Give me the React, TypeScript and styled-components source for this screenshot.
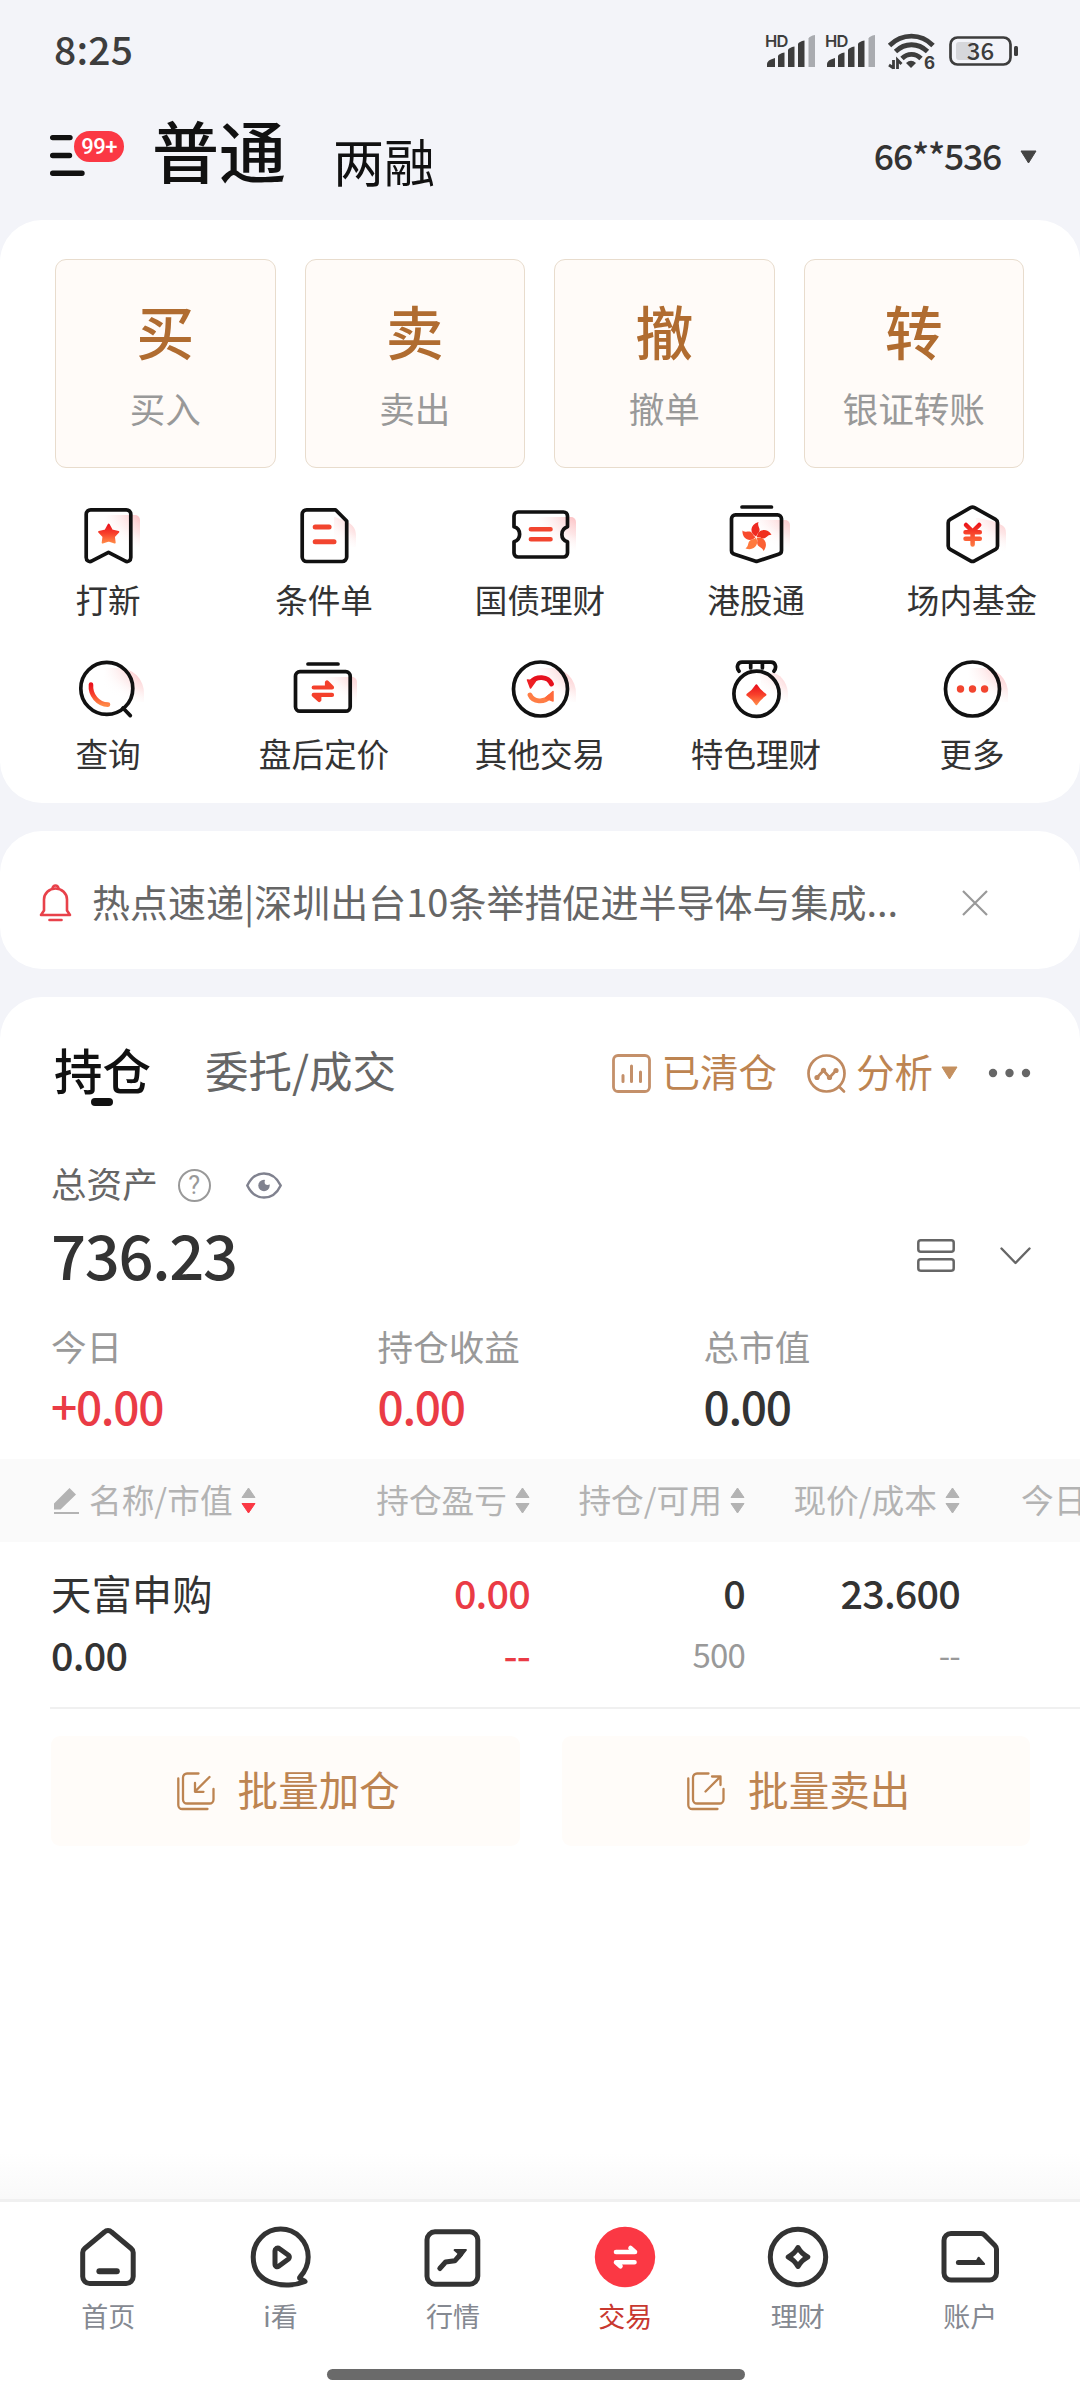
import React from "react";
import styled, { createGlobalStyle } from "styled-components";

const CJK = '"Noto Sans CJK SC", "Noto Sans", sans-serif';
const ROBOTO = 'Roboto, "Noto Sans CJK SC", sans-serif';

const Global = createGlobalStyle`
  * { box-sizing: border-box; }
  body { margin: 0; background: #f3f4f9; font-family: ${CJK}; }
  svg { display: block; flex: none; overflow: visible; }
`;

const Screen = styled.div`
  width: 1080px;
  height: 2400px;
  display: flex;
  flex-direction: column;
  overflow: hidden;
  background: #f3f4f9;
  white-space: nowrap;
`;

/* ---------- status bar ---------- */
const StatusBar = styled.div`
  height: 100px;
  display: flex;
  align-items: center;
  justify-content: space-between;
  padding: 2px 62px 0 54px;
`;
const Clock = styled.span`
  margin-top: -7px;
  font: 500 39px/44px ${CJK};
  letter-spacing: 0.2px;
  color: #3d3d3d;
`;
const StatusIcons = styled.div`
  display: flex;
  align-items: center;
`;
const Battery = styled.svg`
  margin-left: 14px;
`;
const Wifi = styled.svg`
  margin-left: 3px;
`;
const Signal = styled.svg`
  margin-right: 8px;
`;

/* ---------- header ---------- */
const Header = styled.header`
  height: 120px;
  display: flex;
  align-items: flex-start;
  padding: 0 43px 0 50px;
  color: #111;
`;
const MenuButton = styled.div`
  position: relative;
  width: 102px;
  padding-top: 34px;
`;
const Badge = styled.span`
  position: absolute;
  left: 22px;
  top: 29px;
  height: 35px;
  width: 54px;
  border: 2px solid #f3f4f9;
  border-radius: 18px;
  background: #fb3844;
  color: #fff;
  text-align: center;
  font: 500 22px/32px ${ROBOTO};
  letter-spacing: -0.5px;
`;
const AccountTab = styled.span<{ $active?: boolean }>`
  font: ${(p) => (p.$active ? "500 67px/96px" : "400 51px/72px")} ${CJK};
  padding-top: ${(p) => (p.$active ? 1 : 24)}px;
  margin-right: ${(p) => (p.$active ? 47 : 0)}px;
`;
const AccountPicker = styled.div`
  margin-left: auto;
  display: flex;
  align-items: center;
  gap: 19px;
  padding-top: 36px;
`;
const AccountNumber = styled.span`
  margin-top: -3px;
  font: 500 35.5px/44px ${CJK};
  letter-spacing: -1.2px;
  color: #333;
`;

/* ---------- cards ---------- */
const Card = styled.section`
  background: #fff;
  border-radius: 42px;
`;
const QuickCard = styled(Card)`
  height: 583px;
  padding-top: 39px;
`;
const TradeGrid = styled.div`
  display: grid;
  grid-template-columns: repeat(4, 1fr);
  gap: 29px;
  padding: 0 56px 0 55px;
`;
const TradeTile = styled.div`
  height: 209px;
  border: 1px solid #e8dccd;
  border-radius: 11px;
  background: #fffbf8;
  display: flex;
  flex-direction: column;
  align-items: center;
  padding-top: 32px;
`;
const TradeGlyph = styled.span`
  font: 500 58px/76px ${CJK};
  color: #b06c30;
`;
const TradeLabel = styled.span`
  margin-top: 16px;
  font: 400 35.6px/48px ${CJK};
  color: #999;
`;
const MenuGrid = styled.div`
  display: grid;
  grid-template-columns: repeat(5, 216px);
  row-gap: 32.5px;
  padding-top: 32px;
`;
const MenuItem = styled.div`
  display: flex;
  flex-direction: column;
  align-items: center;
  gap: 5px;
  font: 400 32.6px/44px ${CJK};
  color: #333;
`;

const Notice = styled(Card)`
  height: 138px;
  margin: 28px 0;
  display: flex;
  align-items: center;
  padding: 6px 92px 0 39px;
`;
const NoticeText = styled.span`
  margin-left: 20px;
  margin-top: -4px;
  flex: 1;
  font: 400 38px/56px ${CJK};
  color: #666;
`;

/* ---------- holdings ---------- */
const Holdings = styled.section`
  flex: 1;
  background: #fff;
  border-radius: 42px 42px 0 0;
  display: flex;
  flex-direction: column;
`;
const TabRow = styled.div`
  height: 152px;
  display: flex;
  align-items: center;
  padding: 0 49px 0 54px;
`;
const Tab = styled.span<{ $active?: boolean }>`
  position: relative;
  font: ${(p) => (p.$active ? "500 48.5px/56px" : "400 43.5px/60px")} ${CJK};
  color: ${(p) => (p.$active ? "#111" : "#666")};
  margin-right: ${(p) => (p.$active ? 54 : 0)}px;
  padding-bottom: ${(p) => (p.$active ? 9 : 6)}px;
`;
const TabMark = styled.i`
  position: absolute;
  left: 37px;
  bottom: 0;
  width: 22px;
  height: 8px;
  border-radius: 4px;
  background: #111;
`;
const TabTools = styled.div`
  margin-left: auto;
  display: flex;
  align-items: center;
`;
const Tool = styled.div`
  display: flex;
  align-items: center;
  gap: 10px;
  margin-right: 30px;
  font: 400 38.5px/60px ${CJK};
  color: #bd8451;
`;
const ToolText = styled.span`
  margin-top: -7px;
`;
const ToolCaret = styled.span`
  margin-left: -2px;
`;
const AssetLabel = styled.div`
  display: flex;
  align-items: center;
  height: 72px;
  padding-left: 51px;
  font: 400 35.6px/48px ${CJK};
  color: #666;
`;
const LabelText = styled.span`
  margin-top: -4px;
`;
const Help = styled.span`
  width: 33px;
  height: 33px;
  margin: 0 35px 0 20px;
  border: 2px solid #999;
  border-radius: 50%;
  color: #999;
  text-align: center;
  font: 400 25px/29px ${ROBOTO};
`;
const AssetRow = styled.div`
  display: flex;
  align-items: center;
  height: 72px;
  padding: 0 49px 3px 51px;
`;
const AssetValue = styled.span`
  margin: -4px auto 0 0;
  font: 500 61.5px/72px ${CJK};
  letter-spacing: -1.3px;
  color: #333;
`;
const ListIcon = styled.svg`
  margin-right: 45px;
`;
const Stats = styled.div`
  display: grid;
  grid-template-columns: 326.5px 326px 1fr;
  height: 166px;
  padding: 27px 0 0 51px;
`;
const StatLabel = styled.div`
  font: 400 35.6px/52px ${CJK};
  color: #999;
`;
const StatValue = styled.div<{ $red?: boolean }>`
  margin-top: 6px;
  font: 500 46px/54px ${CJK};
  letter-spacing: -1.3px;
  color: ${(p) => (p.$red ? "#ea3b45" : "#333")};
`;

const TableRow = styled.div`
  display: grid;
  grid-template-columns: 264px 215px 215px 215px 1fr;
  padding-left: 51px;
`;
const TableHead = styled(TableRow)`
  height: 83px;
  align-items: center;
  background: #fafafa;
  overflow: hidden;
`;
const HeadCell = styled.div<{ $align?: "start" | "end"; $indent?: number }>`
  display: flex;
  align-items: center;
  justify-content: flex-${(p) => p.$align ?? "end"};
  padding-left: ${(p) => p.$indent ?? 0}px;
  gap: 8px;
  font: 400 32.7px/44px ${CJK};
  color: #b3b3b3;
`;
const HeadText = styled.span`
  margin-top: -4px;
`;
const BodyRow = styled(TableRow)`
  height: 165px;
  padding-top: 20px;
`;
const Cell = styled.div<{ $left?: boolean }>`
  display: flex;
  flex-direction: column;
  gap: 2px;
  align-items: ${(p) => (p.$left ? "flex-start" : "flex-end")};
`;
const StockName = styled.span`
  height: 60px;
  font: 400 40.4px/62px ${CJK};
  color: #333;
`;
const Figure = styled.span<{ $tone?: "red" | "gray" }>`
  font: ${(p) => (p.$tone === "gray" ? 400 : 500)} ${(p) => (p.$tone === "gray" ? 33 : 39.5)}px/60px ${CJK};
  letter-spacing: -0.8px;
  color: ${(p) => (p.$tone === "red" ? "#ea3b45" : p.$tone === "gray" ? "#999" : "#333")};
`;
const Divider = styled.div`
  height: 2px;
  margin-left: 50px;
  background: #f0f0f0;
`;
const BatchRow = styled.div`
  display: grid;
  grid-template-columns: 1fr 1fr;
  gap: 42px;
  padding: 27px 50px 0 51px;
`;
const BatchButton = styled.div`
  height: 110px;
  border-radius: 9px;
  background: #fffcf9;
  display: flex;
  align-items: center;
  justify-content: center;
  gap: 23px;
  padding-left: 6px;
  font: 400 40.6px/60px ${CJK};
  color: #bd8451;
`;
const Fade = styled.div`
  height: 46px;
  margin-top: auto;
  background: linear-gradient(#fff, #f9f9f9);
`;

/* ---------- bottom bar ---------- */
const BottomBar = styled.nav`
  height: 201px;
  border-top: 3px solid #f0f0f0;
  background: #fff;
  padding: 19px 23px 0 22px;
`;
const NavGrid = styled.div`
  display: grid;
  grid-template-columns: repeat(6, 172.4px);
`;
const NavItem = styled.div<{ $active?: boolean }>`
  display: flex;
  flex-direction: column;
  align-items: center;
  gap: 4px;
  font: 400 27px/38px ${CJK};
  color: ${(p) => (p.$active ? "#c8382f" : "#858991")};
`;
const HomeBar = styled.div`
  width: 418px;
  height: 11px;
  margin: 34px 0 0 305px;
  border-radius: 6px;
  background: #6a6a6a;
`;

/* ---------- drawings ---------- */
const GradientDefs = styled.svg`
  position: absolute;
`;
const Defs = () => (
  <GradientDefs width="0" height="0">
    <defs>
      <linearGradient id="hot" x1="0" y1="20" x2="0" y2="50" gradientUnits="userSpaceOnUse">
        <stop offset="0" stopColor="#e60012" />
        <stop offset="0.45" stopColor="#f8452c" />
        <stop offset="1" stopColor="#ff8a48" />
      </linearGradient>
      <linearGradient id="hotBox" x1="0" y1="0" x2="0" y2="1">
        <stop offset="0" stopColor="#e9131d" />
        <stop offset="0.5" stopColor="#f8402b" />
        <stop offset="1" stopColor="#ff8646" />
      </linearGradient>
      <linearGradient id="glow" x1="66" y1="14" x2="52" y2="46" gradientUnits="userSpaceOnUse">
        <stop offset="0" stopColor="#fcc0c3" />
        <stop offset="0.5" stopColor="#fddcdd" stopOpacity="0.7" />
        <stop offset="1" stopColor="#fff" stopOpacity="0" />
      </linearGradient>
      <linearGradient id="glowLeft" x1="32" y1="0" x2="66" y2="0" gradientUnits="userSpaceOnUse">
        <stop offset="0" stopColor="#fff" />
        <stop offset="0.3" stopColor="#fff" stopOpacity="0.7" />
        <stop offset="1" stopColor="#fff" stopOpacity="0" />
      </linearGradient>
    </defs>
  </GradientDefs>
);

const Glow = ({ d }: { d: string }) => (
  <g stroke="none">
    <path d={d} fill="url(#glow)" />
    <path d={d} fill="url(#glowLeft)" />
  </g>
);
const SquareGlow = ({ x = 68, y = 15 }: { x?: number; y?: number }) => (
  <Glow d={`M30 ${y}H${x - 5}a5 5 0 0 1 5 5V50H30z`} />
);
const RoundGlow = () => <Glow d="M30 14h16a25 25 0 0 1 26 26v8H30z" />;

const MenuIcon = ({ children }: { children: React.ReactNode }) => (
  <svg width="72" height="72" viewBox="0 0 72 72" fill="none" stroke="#111" strokeWidth="3.7" strokeLinecap="round" strokeLinejoin="round">
    {children}
  </svg>
);

const petals: [number, string][] = [
  [0, "#ee2a22"],
  [72, "#f0301f"],
  [144, "#fb6034"],
  [216, "#ff7a3e"],
  [288, "#f8492c"],
];

const menuItems: { label: string; icon: React.ReactNode }[] = [
  {
    label: "打新",
    icon: (
      <>
        <SquareGlow />
        <path d="M18.7 9.8H54.3a4.500 4.500 0 0 1 4.500 4.500V57.500c0 3.200-3 5-5.800 3.400L36.500 52.300 20 60.900c-2.800 1.600-5.800-.2-5.800-3.400V14.300a4.500 4.500 0 0 1 4.500-4.500z" />
        <path d="M36.700 24.500l3.300 6 6.400 1.300-4.400 4.800.8 6-6.100-2-6.100 2 .8-6-4.400-4.800 6.400-1.300z" fill="url(#hotBox)" stroke="url(#hotBox)" strokeWidth="1.800" />
      </>
    ),
  },
  {
    label: "条件单",
    icon: (
      <>
        <Glow d="M46 17c8 3 22 5 22 18v12H46z" />
        <path d="M18.700 9.800H47.500L58.700 21V57a4.500 4.500 0 0 1-4.500 4.500H18.700a4.500 4.500 0 0 1-4.500-4.500V14.300a4.500 4.500 0 0 1 4.500-4.500z" />
        <path d="M27.200 27H41.100M27.200 41.700H46" stroke="#f2452f" strokeWidth="5" />
      </>
    ),
  },
  {
    label: "国债理财",
    icon: (
      <>
        <SquareGlow x={72} y={17} />
        <path d="M14 12H59.500a4 4 0 0 1 4 4V26.800c-7.500 2.500-7.500 12.700 0 15V53a4 4 0 0 1-4 4H14a4 4 0 0 1-4-4V41.800c7.500-2.500 7.500-12.700 0-15V16a4 4 0 0 1 4-4z" />
        <path d="M26.900 29.300H46.500M26.900 39.300H46.500" stroke="#f2452f" strokeWidth="4.600" />
      </>
    ),
  },
  {
    label: "港股通",
    icon: (
      <>
        <SquareGlow x={70} y={20} />
        <path d="M22 7H51.500M15.500 14.800H57.500a4 4 0 0 1 4 4V50.500a4 4 0 0 1-3 3.800L36.500 61.500 14.500 54.300a4 4 0 0 1-3-3.800V18.800a4 4 0 0 1 4-4z" />
        <g stroke="none">
          {petals.map(([angle, color]) => (
            <path
              key={angle}
              d="M36.300 36.600C29.500 34 29.500 24.500 38.500 22C36.800 26.500 41.500 28.500 38.800 32.500C37.200 34 36.800 35 36.300 36.600z"
              fill={color}
              transform={`rotate(${angle} 36.300 37.300)`}
            />
          ))}
        </g>
      </>
    ),
  },
  {
    label: "场内基金",
    icon: (
      <>
        <Glow d="M40 18l16 3c9 4 14 4 14 12v20H40z" />
        <path d="M34.500 7.700a4 4 0 0 1 4 0L59.500 19.300a4 4 0 0 1 2 3.400V46a4 4 0 0 1-2 3.400L38.500 60.900a4 4 0 0 1-4 0L14.200 49.400a4 4 0 0 1-2-3.400V22.700a4 4 0 0 1 2-3.400z" />
        <path d="M30 25l6.600 6.500L43.200 25M29.500 32.200H43.800M29.500 38.800H43.800M36.600 32V44.500" stroke="url(#hot)" strokeWidth="4.500" />
      </>
    ),
  },
  {
    label: "查询",
    icon: (
      <>
        <RoundGlow />
        <circle cx="34.800" cy="34.400" r="26" />
        <path d="M51 54l7.300 7.600" />
        <path d="M19 30.500C18 41 26 50.600 36 50.600" stroke="url(#hotBox)" strokeWidth="4.600" />
      </>
    ),
  },
  {
    label: "盘后定价",
    icon: (
      <>
        <SquareGlow x={69} y={23} />
        <path d="M20 10H50" />
        <rect x="7.500" y="17.700" width="54.700" height="39.500" rx="4.500" />
        <g stroke="#f4402b" strokeWidth="4.200" fill="#f4402b">
          <path d="M25.700 33.500H44L39 28.500V33" />
          <path d="M44 40.900H25.700l5.600 5V41" />
        </g>
      </>
    ),
  },
  {
    label: "其他交易",
    icon: (
      <>
        <RoundGlow />
        <circle cx="36.500" cy="35" r="27" />
        <path d="M27 28c5-6 17-6.500 20.500 2" stroke="#e60f1c" strokeWidth="4.800" />
        <path d="M23.500 26l8 1-5 7z" fill="#ee2024" stroke="#ee2024" strokeWidth="1.500" />
        <path d="M26 41c3 7 14 8 20 1.500" stroke="#ff7d45" strokeWidth="4.800" />
        <path d="M49 37.500v9.500l-7.500-3z" fill="#ff6a3c" stroke="#ff6a3c" strokeWidth="1.500" />
      </>
    ),
  },
  {
    label: "特色理财",
    icon: (
      <>
        <Glow d="M40 19h14c9 3 14 12 14 22v8H44z" />
        <circle cx="36.500" cy="39.800" r="22.600" />
        <path d="M19 17.200c-3-4-1.500-9 3-9H51c4.500 0 6 5 3 9M30.700 9v5M42.400 9v5" />
        <path d="M36.400 31.500C39 35.800 41 37.800 45.200 40.800 41 43.600 39 45.700 36.400 50 33.800 45.700 31.800 43.600 27.500 40.800 31.800 37.800 33.800 35.800 36.400 31.500z" fill="url(#hotBox)" stroke="url(#hotBox)" strokeWidth="2.400" />
      </>
    ),
  },
  {
    label: "更多",
    icon: (
      <>
        <RoundGlow />
        <circle cx="36.500" cy="35" r="27" />
        <g fill="#f2452f" stroke="none">
          <circle cx="24.500" cy="35" r="3.700" />
          <circle cx="36.500" cy="35" r="3.700" />
          <circle cx="48.600" cy="35" r="3.700" />
        </g>
      </>
    ),
  },
];

const navItems: { label: string; active?: boolean; icon: React.ReactNode }[] = [
  {
    label: "首页",
    icon: (
      <>
        <path d="M32.500 11a5 5 0 0 1 7 0L59.200 27.500a5.500 5.500 0 0 1 2 4V55.500a7 7 0 0 1-7 7H17.700a7 7 0 0 1-7-7V31.500a5.500 5.500 0 0 1 2-4z" />
        <path d="M27.400 50.300H44.800" strokeWidth="6" />
      </>
    ),
  },
  {
    label: "i看",
    icon: (
      <>
        <path d="M60 60.500C41 68.500 8.200 64 8.200 36A27.500 28 0 0 1 63.200 36C63.200 44 60 50.500 55 56c-2 2 3.500 3 5 4.500z" />
        <path d="M31.500 27.300c-1 .6-1.500 1.300-1.500 2.400V43c0 2.800 2.200 3.400 4 2l9.500-7a2.500 2.500 0 0 0 0-3.800l-9-6.500a3 3 0 0 0-3-.4z" />
      </>
    ),
  },
  {
    label: "行情",
    icon: (
      <>
        <rect x="10" y="10.800" width="50.800" height="52.400" rx="8" />
        <path d="M22.800 47.500l5.800-6.500 9.200-1.200 6-6.800" />
        <path d="M37.500 29H49l-6.500 8-1.500-5z" fill="#333" strokeWidth="1.800" />
      </>
    ),
  },
  {
    label: "交易",
    active: true,
    icon: (
      <>
        <circle cx="36" cy="36" r="30.200" fill="#fb3844" stroke="none" />
        <path d="M27 31H46L41.500 27M45.500 41.300H27l4.500 4" stroke="#fff" strokeWidth="4.600" />
      </>
    ),
  },
  {
    label: "理财",
    icon: (
      <>
        <circle cx="36" cy="36" r="27.700" />
        <path d="M36 26.500C38.500 31 41 33.500 45.800 36 41 38.500 38.500 41 36 45.500 33.500 41 31 38.500 26.200 36 31 33.500 33.500 31 36 26.500z" />
      </>
    ),
  },
  {
    label: "账户",
    icon: (
      <>
        <path d="M17 12.500H47a5 5 0 0 1 3.500 1.500L60.700 24.200a6 6 0 0 1 1.800 4V52a7 7 0 0 1-7 7H17a7 7 0 0 1-7-7V19.500a7 7 0 0 1 7-7z" />
        <path d="M24.400 41.600H46" />
        <path d="M44.600 36.700l5.500 6.300h-9z" fill="#333" strokeWidth="2" />
      </>
    ),
  },
];

const SignalIcon = () => (
  <Signal width="52" height="36" viewBox="0 0 52 36" fill="#3d3d3d">
    <text x="0" y="13.500" fontSize="16.500" fontWeight="600" fontFamily="Inter, sans-serif" textLength="23.500">HD</text>
    <path d="M2 34v-3q0-4 8-6v9zM13 34V23q1-2.500 6.500-3.500V34zM23 34V17q1-2.500 6.500-3.500V34zM33 34V11q1-2.500 6.500-3.500V34z" />
    <path d="M43.500 34V5.500q1-2.500 6.500-3.500V34z" fill="#a9abb0" />
  </Signal>
);

const Caret = ({ color }: { color: string }) => (
  <svg width="17" height="14" viewBox="0 0 17 14">
    <path d="M1 1h15L8.500 13z" fill={color} stroke={color} strokeLinejoin="round" />
  </svg>
);

const SortIcon = ({ down = "#b3b3b3" }: { down?: string }) => (
  <svg width="15" height="27" viewBox="0 0 15 27" strokeLinejoin="round">
    <path d="M7.500 1L14 10.500H1z" fill="#b3b3b3" stroke="#b3b3b3" />
    <path d="M7.500 26L14 16.500H1z" fill={down} stroke={down} />
  </svg>
);

const BatchIcon = ({ out }: { out?: boolean }) => (
  <svg width="38" height="38" viewBox="0 0 38 38" fill="none" stroke="#bd8451" strokeWidth="2.300" strokeLinecap="round" strokeLinejoin="round">
    <path d="M21.500 1.500H10a4 4 0 0 0-4 4V27.500a4 4 0 0 0 4 4H32.500a4 4 0 0 0 4-4V17" />
    <path d="M1.300 6.500V33a4 4 0 0 0 4 4H30.500" />
    <path d={out ? "M18.500 19.500L33 5M25 4.500H33.500V13" : "M32.500 5L18 19.500M18 11V19.800H26.500"} />
  </svg>
);

export default function App() {
  return (
    <Screen>
      <Global />
      <Defs />
      <StatusBar>
        <Clock>8:25</Clock>
        <StatusIcons>
          <SignalIcon />
          <SignalIcon />
          <Wifi width="47" height="37" viewBox="0 0 47 37" fill="none" stroke="#3d3d3d" strokeWidth="4.800">
            <path d="M1.500 12.500C14 0 33 0 45 12.500" />
            <path d="M7.500 18.500C17 9.500 30 9.500 39.500 18.500" />
            <path d="M14 25.500C19.500 20 27.500 20 33 25.500" />
            <path d="M18 30q5-4.500 10 0l-5 5z" fill="#3d3d3d" stroke="none" />
            <path d="M5.500 27v9M1 32l4.500 3M9.500 36v-9l4 4" strokeWidth="2.800" />
            <text x="36" y="36" fontSize="17" fontWeight="700" fontFamily="Inter, sans-serif" fill="#3d3d3d" stroke="none">6</text>
          </Wifi>
          <Battery width="69" height="30" viewBox="0 0 69 30">
            <rect x="1.500" y="1.500" width="60" height="27" rx="7" fill="none" stroke="#3d3d3d" strokeWidth="2.700" />
            <rect x="7" y="6" width="18" height="18" rx="3" fill="#d6d7db" />
            <rect x="65" y="10" width="4" height="10" rx="1.500" fill="#3d3d3d" />
            <text x="31.500" y="24" fontSize="24" fontWeight="500" fontFamily="Noto Sans CJK SC, sans-serif" textAnchor="middle" fill="#3d3d3d">36</text>
          </Battery>
        </StatusIcons>
      </StatusBar>

      <Header>
        <MenuButton>
          <svg width="36" height="43" viewBox="0 0 36 43" stroke="#111" strokeWidth="5.400" strokeLinecap="round">
            <path d="M2.700 3.600H20M2.700 21.500H19.500M2.700 39.300H32" />
          </svg>
          <Badge>99+</Badge>
        </MenuButton>
        <AccountTab $active>普通</AccountTab>
        <AccountTab>两融</AccountTab>
        <AccountPicker>
          <AccountNumber>66**536</AccountNumber>
          <Caret color="#444" />
        </AccountPicker>
      </Header>

      <QuickCard>
        <TradeGrid>
          {[
            ["买", "买入"],
            ["卖", "卖出"],
            ["撤", "撤单"],
            ["转", "银证转账"],
          ].map(([glyph, label]) => (
            <TradeTile key={label}>
              <TradeGlyph>{glyph}</TradeGlyph>
              <TradeLabel>{label}</TradeLabel>
            </TradeTile>
          ))}
        </TradeGrid>
        <MenuGrid>
          {menuItems.map((m) => (
            <MenuItem key={m.label}>
              <MenuIcon>{m.icon}</MenuIcon>
              {m.label}
            </MenuItem>
          ))}
        </MenuGrid>
      </QuickCard>

      <Notice>
        <svg width="33" height="38" viewBox="0 0 33 38" fill="none" stroke="#e8414a" strokeWidth="2.600" strokeLinecap="round" strokeLinejoin="round">
          <path d="M13.500 4.500a3 3 0 0 1 6 0" />
          <path d="M2 31L5 26.500V15.500a11.500 11 0 0 1 23 0V26.500L31 31z" />
          <path d="M10.500 36H22.500" />
        </svg>
        <NoticeText>热点速递|深圳出台10条举措促进半导体与集成...</NoticeText>
        <svg width="26" height="26" viewBox="0 0 26 26" stroke="#999" strokeWidth="2.200">
          <path d="M1 1L25 25M25 1L1 25" />
        </svg>
      </Notice>

      <Holdings>
        <TabRow>
          <Tab $active>
            持仓
            <TabMark />
          </Tab>
          <Tab>委托/成交</Tab>
          <TabTools>
            <Tool>
              <svg width="39" height="39" viewBox="0 0 39 39" fill="none" stroke="#c4906a" strokeWidth="2.800" strokeLinecap="round">
                <rect x="1.500" y="1.500" width="36" height="36" rx="4.500" />
                <path d="M11 21.500V27.500M19.500 12V27.500M28.500 18V27.500" strokeWidth="3" />
              </svg>
              <ToolText>已清仓</ToolText>
            </Tool>
            <Tool>
              <svg width="39" height="39" viewBox="0 0 39 39" fill="none" stroke="#c08a60" strokeWidth="2.700" strokeLinecap="round" strokeLinejoin="round">
                <circle cx="19.500" cy="19.500" r="18" />
                <path d="M32 32.500L37 37.500M10 23.500L16.500 16.500 22.500 23.500 29 16.500" />
                <g fill="#c08a60" stroke="none">
                  <circle cx="10" cy="23.500" r="2.600" />
                  <circle cx="16.500" cy="16.300" r="2.600" />
                  <circle cx="22.500" cy="23.500" r="2.600" />
                  <circle cx="29" cy="16.500" r="2.600" />
                </g>
              </svg>
              <ToolText>分析</ToolText>
              <ToolCaret>
                <Caret color="#c4905f" />
              </ToolCaret>
            </Tool>
            <svg width="43" height="10" viewBox="0 0 43 10" fill="#666">
              <circle cx="5" cy="5" r="4.200" />
              <circle cx="21.500" cy="5" r="4.200" />
              <circle cx="38" cy="5" r="4.200" />
            </svg>
          </TabTools>
        </TabRow>

        <AssetLabel>
          <LabelText>总资产</LabelText>
          <Help>?</Help>
          <svg width="36" height="27" viewBox="0 0 36 27" fill="none" stroke="#80828f" strokeWidth="2.500" strokeLinejoin="round">
            <path d="M1.300 13.500C9-2.600 27-2.600 34.700 13.500C27 29.600 9 29.600 1.300 13.500z" />
            <circle cx="18" cy="13.500" r="5.700" fill="#80828f" stroke="none" />
            <circle cx="21.500" cy="10" r="2.900" fill="#fff" stroke="none" />
          </svg>
        </AssetLabel>
        <AssetRow>
          <AssetValue>736.23</AssetValue>
          <ListIcon width="38" height="33" viewBox="0 0 38 33" fill="none" stroke="#666" strokeWidth="2.500">
            <rect x="1.300" y="1.300" width="35.400" height="11.500" rx="2.500" />
            <rect x="1.300" y="20.200" width="35.400" height="11.500" rx="2.500" />
          </ListIcon>
          <svg width="31" height="18" viewBox="0 0 31 18" fill="none" stroke="#666" strokeWidth="2.400" strokeLinecap="round" strokeLinejoin="round">
            <path d="M1.500 1.500L15.500 16 29.500 1.500" />
          </svg>
        </AssetRow>

        <Stats>
          <div>
            <StatLabel>今日</StatLabel>
            <StatValue $red>+0.00</StatValue>
          </div>
          <div>
            <StatLabel>持仓收益</StatLabel>
            <StatValue $red>0.00</StatValue>
          </div>
          <div>
            <StatLabel>总市值</StatLabel>
            <StatValue>0.00</StatValue>
          </div>
        </Stats>

        <TableHead>
          <HeadCell $align="start" $indent={2}>
            <svg width="28" height="28" viewBox="0 0 28 28" fill="#b3b3b3">
              <path d="M1 16.500L16.500 1 23 7.500 7.500 22.500H1zM1 25H26v2H1z" />
            </svg>
            <HeadText>名称/市值</HeadText>
            <SortIcon down="#fb3844" />
          </HeadCell>
          {["持仓盈亏", "持仓/可用", "现价/成本"].map((t) => (
            <HeadCell key={t}>
              <HeadText>{t}</HeadText>
              <SortIcon />
            </HeadCell>
          ))}
          <HeadCell $align="start" $indent={61}>
            <HeadText>今日</HeadText>
          </HeadCell>
        </TableHead>
        <BodyRow>
          <Cell $left>
            <StockName>天富申购</StockName>
            <Figure>0.00</Figure>
          </Cell>
          <Cell>
            <Figure $tone="red">0.00</Figure>
            <Figure $tone="red">--</Figure>
          </Cell>
          <Cell>
            <Figure>0</Figure>
            <Figure $tone="gray">500</Figure>
          </Cell>
          <Cell>
            <Figure>23.600</Figure>
            <Figure $tone="gray">--</Figure>
          </Cell>
        </BodyRow>
        <Divider />
        <BatchRow>
          <BatchButton>
            <BatchIcon />
            <LabelText>批量加仓</LabelText>
          </BatchButton>
          <BatchButton>
            <BatchIcon out />
            <LabelText>批量卖出</LabelText>
          </BatchButton>
        </BatchRow>
        <Fade />
      </Holdings>

      <BottomBar>
        <NavGrid>
          {navItems.map((n) => (
            <NavItem key={n.label} $active={n.active}>
              <svg width="72" height="72" viewBox="0 0 72 72" fill="none" stroke="#333" strokeWidth="5" strokeLinecap="round" strokeLinejoin="round">
                {n.icon}
              </svg>
              {n.label}
            </NavItem>
          ))}
        </NavGrid>
        <HomeBar />
      </BottomBar>
    </Screen>
  );
}
